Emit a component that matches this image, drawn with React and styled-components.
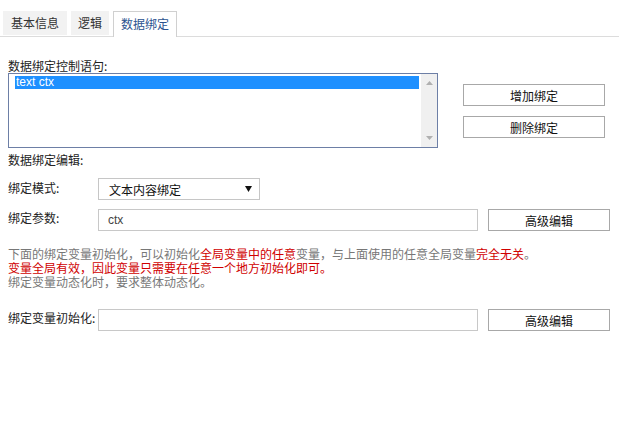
import React from 'react';
import styled, { createGlobalStyle } from 'styled-components';

const GlobalStyle = createGlobalStyle`
	html, body {
		margin: 0;
		padding: 0;
		background: #fff;
	}
	body {
		font-family: 'Noto Sans CJK SC', 'Liberation Sans', sans-serif;
		font-size: 12px;
		color: #222;
	}
`;

const Page = styled.div`
	width: 619px;
	height: 439px;
	background: #fff;
`;

const TabBar = styled.div`
	display: flex;
	gap: 4px;
	padding: 11px 0 0 3px;
	border-bottom: 1px solid #dcdcdc;
`;

const Tab = styled.div`
	height: 24px;
	line-height: 24px;
	padding: 0 ${(p) => (p.$narrow ? 7 : 8)}px;
	font-size: 12px;
	background: #f2f2f2;
	color: #333;
`;

const ActiveTab = styled(Tab)`
	height: 25px;
	padding: 0 7px;
	margin-bottom: -1px;
	background: #fff;
	color: #2c5390;
	border: 1px solid #d0d0d0;
	border-bottom: none;
`;

const Content = styled.div`
	padding: 22px 8px 0 8px;
`;

const Label = styled.div`
	font-size: 12px;
	line-height: 14px;
	color: #222;
	margin-top: ${(p) => p.$mt || 0}px;
`;

const TopRow = styled.div`
	display: flex;
	align-items: flex-start;
`;

const ListBox = styled.div`
	width: 428px;
	height: 73px;
	border: 1px solid #6d7fa6;
	display: flex;
	background: #fff;
`;

const ListItems = styled.div`
	flex: 1;
	padding: 2px 2px 0 6px;
`;

const ListItem = styled.div`
	height: 13px;
	line-height: 13px;
	font-family: 'Liberation Sans', Arial, sans-serif;
	font-size: 12px;
	padding-left: 1px;
	background: ${(p) => (p.$selected ? '#1e90ff' : 'transparent')};
	color: ${(p) => (p.$selected ? '#fff' : '#222')};
`;

const ScrollTrack = styled.div`
	width: 16px;
	background: #f0f0f0;
	display: flex;
	flex-direction: column;
	justify-content: space-between;
	align-items: center;
	padding: 7px 0;
`;

const ButtonColumn = styled.div`
	display: flex;
	flex-direction: column;
	gap: 10px;
	margin: 11px 0 0 25px;
`;

const Button = styled.button`
	width: ${(p) => p.$w || 142}px;
	height: 22px;
	padding: 0;
	background: #fff;
	border: 1px solid #a8a8a8;
	border-radius: 0;
	font-family: 'Noto Sans CJK SC', 'Liberation Sans', sans-serif;
	font-size: 12px;
	color: #111;
	cursor: pointer;
`;

const FieldRow = styled.div`
	display: flex;
	align-items: center;
	margin-top: ${(p) => p.$mt || 0}px;
`;

const FieldLabel = styled.div`
	width: 90px;
	flex-shrink: 0;
	font-size: 12px;
	color: #222;
	align-self: flex-start;
	padding-top: ${(p) => p.$pt || 0}px;
`;

const SelectBox = styled.div`
	width: 162px;
	height: 22px;
	box-sizing: border-box;
	border: 1px solid #c6c6c6;
	display: flex;
	align-items: center;
	justify-content: space-between;
	padding: 0 7px 0 10px;
	font-size: 12px;
	color: #111;
`;

const TextInput = styled.input`
	width: 380px;
	height: 22px;
	box-sizing: border-box;
	border: 1px solid #c8c8c8;
	padding: 0 0 0 9px;
	font-family: 'Liberation Sans', Arial, sans-serif;
	font-size: 12px;
	color: #444;
	outline: none;
	margin-right: 10px;
`;

const Notice = styled.div`
	margin-top: 16px;
	font-size: 12px;
	line-height: 14px;
	color: #777;
`;

const Red = styled.span`
	color: #d00000;
`;

const App = () => {
	return (
		<>
			<GlobalStyle />
			<Page>
				<TabBar>
					<Tab>基本信息</Tab>
					<Tab $narrow>逻辑</Tab>
					<ActiveTab>数据绑定</ActiveTab>
				</TabBar>
				<Content>
					<Label>数据绑定控制语句:</Label>
					<TopRow>
						<ListBox>
							<ListItems>
								<ListItem $selected>text ctx</ListItem>
							</ListItems>
							<ScrollTrack>
								<svg width='7' height='4' viewBox='0 0 7 4'>
									<path d='M0 4 L3.5 0 L7 4 Z' fill='#b0b0b0' />
								</svg>
								<svg width='7' height='4' viewBox='0 0 7 4'>
									<path d='M0 0 L3.5 4 L7 0 Z' fill='#b0b0b0' />
								</svg>
							</ScrollTrack>
						</ListBox>
						<ButtonColumn>
							<Button>增加绑定</Button>
							<Button>删除绑定</Button>
						</ButtonColumn>
					</TopRow>
					<Label $mt={5}>数据绑定编辑:</Label>
					<FieldRow $mt={11}>
						<FieldLabel $pt={1}>绑定模式:</FieldLabel>
						<SelectBox>
							<span>文本内容绑定</span>
							<svg width='7' height='6' viewBox='0 0 7 6'>
								<path d='M0 0 L7 0 L3.5 6 Z' fill='#111' />
							</svg>
						</SelectBox>
					</FieldRow>
					<FieldRow $mt={9}>
						<FieldLabel>绑定参数:</FieldLabel>
						<TextInput defaultValue='ctx' />
						<Button $w={122}>高级编辑</Button>
					</FieldRow>
					<Notice>
						下面的绑定变量初始化，可以初始化<Red>全局变量中的任意</Red>变量，与上面使用的任意全局变量<Red>完全无关</Red>。
						<br />
						<Red>变量全局有效，因此变量只需要在任意一个地方初始化即可。</Red>
						<br />
						绑定变量动态化时，要求整体动态化。
					</Notice>
					<FieldRow $mt={20}>
						<FieldLabel>绑定变量初始化:</FieldLabel>
						<TextInput />
						<Button $w={122}>高级编辑</Button>
					</FieldRow>
				</Content>
			</Page>
		</>
	);
};

export default App;
